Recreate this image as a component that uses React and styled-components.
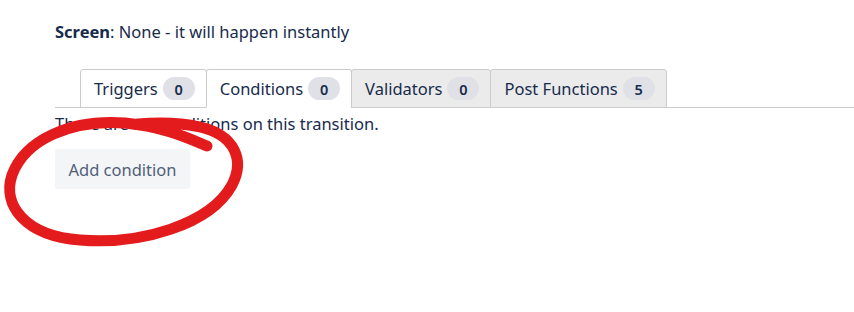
import styled, { createGlobalStyle } from "styled-components";

const GlobalStyle = createGlobalStyle`
  html, body {
    margin: 0;
    padding: 0;
    background: #ffffff;
  }
  body {
    font-family: "Noto Sans", "Open Sans", sans-serif;
    color: #172b4d;
  }
`;

const tabs = [
  { label: "Triggers", count: 0, kind: "plain" },
  { label: "Conditions", count: 0, kind: "active" },
  { label: "Validators", count: 0, kind: "grey" },
  { label: "Post Functions", count: 5, kind: "grey" },
];

function App() {
  return (
    <>
      <GlobalStyle />
      <Page>
        <ScreenLine>
          <strong>Screen</strong>: None - it will happen instantly
        </ScreenLine>

        <TabBar>
          {tabs.map((t) => (
            <Tab key={t.label} kind={t.kind}>
              <span>{t.label}</span>
              <Badge>{t.count}</Badge>
            </Tab>
          ))}
        </TabBar>

        <Message>There are no conditions on this transition.</Message>

        <AddButton>Add condition</AddButton>

        {/* hand drawn red ring over the button */}
        <Scribble viewBox="0 0 854 312" width="854" height="312">
          <path
            d="M 207 146
               C 188 138, 165 127, 125 123
               C 70 119, 25 140, 12 175
               C 2 205, 25 236, 80 240
               C 140 245, 210 225, 232 185
               C 245 160, 235 135, 200 127
               C 178 122, 160 122, 138 124"
            fill="none"
            stroke="#e31b1d"
            strokeWidth="11"
            strokeLinecap="round"
            strokeLinejoin="round"
          />
        </Scribble>
      </Page>
    </>
  );
}

const Page = styled.div`
  position: relative;
  width: 854px;
  height: 312px;
  box-sizing: border-box;
  padding: 22px 0 0 55px;
  overflow: hidden;
`;

const ScreenLine = styled.div`
  font-size: 16.5px;
  line-height: 20px;
  margin-bottom: 27px;

  strong {
    font-weight: 700;
  }
`;

const TabBar = styled.div`
  display: flex;
  align-items: flex-end;
  padding-left: 25px;
  border-bottom: 1px solid #cccccc;
`;

const Tab = styled.div`
  display: flex;
  align-items: center;
  gap: 5px;
  height: 39px;
  box-sizing: border-box;
  padding: 0 11px 0 13px;
  margin-left: -1px;
  margin-bottom: -1px;
  border: 1px solid #cccccc;
  border-bottom-color: ${(p) => (p.kind === "active" ? "#ffffff" : "#cccccc")};
  border-radius: 3px 3px 0 0;
  background: ${(p) => (p.kind === "grey" ? "#ebebeb" : "#ffffff")};
  font-size: 16.5px;
  color: #172b4d;

  &:first-child {
    margin-left: 0;
  }
`;

const Badge = styled.span`
  display: inline-flex;
  align-items: center;
  justify-content: center;
  min-width: 32px;
  height: 23px;
  border-radius: 12px;
  background: #dfe1e6;
  font-size: 14.5px;
  font-weight: 600;
  color: #172b4d;
`;

const Message = styled.div`
  font-size: 16.5px;
  line-height: 20px;
  margin-top: 6px;
`;

const AddButton = styled.button`
  display: block;
  margin-top: 15px;
  width: 135px;
  height: 40px;
  border: none;
  border-radius: 3px;
  background: #f4f5f7;
  color: #505f79;
  font-family: inherit;
  font-size: 16.5px;
  cursor: pointer;
`;

const Scribble = styled.svg`
  position: absolute;
  top: 0;
  left: 0;
  pointer-events: none;
`;

export default App;
